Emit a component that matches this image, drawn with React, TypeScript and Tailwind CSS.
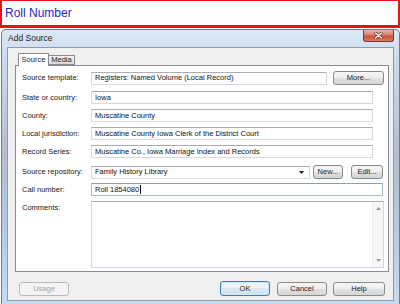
import React from "react";

const fields = [
    { label: "State or country:", value: "Iowa" },
    { label: "County:", value: "Muscatine County" },
    { label: "Local jurisdiction:", value: "Muscatine County Iowa Clerk of the District Court" },
    { label: "Record Series:", value: "Muscatine Co., Iowa Marriage Index and Records" },
];

function Btn({ children, className = "" }: { children: React.ReactNode; className?: string }) {
    return (
        <div
            className={`h-[14px] flex items-center justify-center rounded-[3px] border border-[#8a8a8a] bg-[linear-gradient(#f6f6f6_0%,#eeeeee_50%,#e1e1e1_50%,#d6d6d6_100%)] text-[7.5px] text-[#222] ${className}`}
        >
            {children}
        </div>
    );
}

function Label({ children }: { children: React.ReactNode }) {
    return <div className="w-[69px] shrink-0 text-[7.5px] text-[#222] leading-none">{children}</div>;
}

function Field({ value, className = "" }: { value?: string; className?: string }) {
    return (
        <div
            className={`h-[13px] flex items-center px-[3px] bg-white border border-[#d5d8de] border-t-[#abadb3] text-[7.5px] text-[#111] leading-none ${className}`}
        >
            {value}
        </div>
    );
}

function Tri({ up }: { up?: boolean }) {
    return (
        <svg width="5" height="3" viewBox="0 0 5 3">
            <polygon points={up ? "0,3 5,3 2.5,0" : "0,0 5,0 2.5,3"} fill="#9a9a9a" />
        </svg>
    );
}

export default function App() {
    return (
        <div className="w-[400px] h-[304px] bg-white overflow-hidden flex flex-col font-['Liberation_Sans',Arial,sans-serif]">
            {/* Header */}
            <div className="h-[28px] shrink-0 flex items-center px-[3px] border-x-2 border-t border-b-[3px] border-[#e8101a]">
                <span className="text-[12px] text-[#1f1fc4]">Roll Number</span>
            </div>

            {/* Window */}
            <div className="mt-[1px] ml-[1px] flex-1 flex flex-col rounded-t-[5px] border border-b-0 border-[#6f7c8c] bg-[linear-gradient(#dbe7f4_0%,#cddcee_10%,#b3bfcc_45%,#b7cbe3_75%,#c7dcf1_100%)] px-[5px] pb-[4px]">
                {/* Title bar */}
                <div className="h-[17px] shrink-0 flex items-start justify-between">
                    <span className="pl-[1px] pt-[4px] text-[8.5px] text-[#1c1c1c] leading-none">Add Source</span>
                    <div className="w-[31px] h-[12px] flex items-center justify-center rounded-b-[3px] border border-t-0 border-[#7a3a30] bg-[linear-gradient(#eab3a6_0%,#d9806f_45%,#c9503e_55%,#d77a5c_100%)]">
                        <svg width="9" height="7" viewBox="0 0 9 7">
                            <path d="M1.5 1 L7.5 6 M7.5 1 L1.5 6" stroke="#5a2018" strokeWidth="2.6" strokeLinecap="round" />
                            <path d="M1.5 1 L7.5 6 M7.5 1 L1.5 6" stroke="#ffffff" strokeWidth="1.5" strokeLinecap="round" />
                        </svg>
                    </div>
                </div>

                {/* Client area */}
                <div className="flex-1 flex flex-col bg-[#f0f0f0] border border-[#8b9bb0] pl-[7px] pr-[4px] pt-[5px] pb-[4px]">
                    {/* Tabs */}
                    <div className="h-[12px] flex items-end ml-[3px]">
                        <div className="relative z-10 -mb-px w-[31px] h-[13px] flex items-center justify-center bg-white border border-b-0 border-[#898c95] text-[7.5px] text-[#222]">
                            Source
                        </div>
                        <div className="w-[26px] h-[10px] flex items-center justify-center border border-l-0 border-[#898c95] bg-[linear-gradient(#f3f3f3,#d9d9d9)] text-[7.5px] text-[#222]">
                            Media
                        </div>
                    </div>

                    {/* Tab panel */}
                    <div className="h-[207px] shrink-0 flex flex-col bg-white border border-[#898c95] pl-[6px] pr-[4px] pt-[5px]">
                        <div className="flex items-center">
                            <Label>Source template:</Label>
                            <Field value="Registers: Named Volume (Local Record)" className="w-[236px]" />
                            <Btn className="ml-[6px] w-[51px]">More...</Btn>
                        </div>

                        {fields.map((f, i) => (
                            <div key={f.label} className={`flex items-center ${i === 0 ? "mt-[6px]" : "mt-[5px]"}`}>
                                <Label>{f.label}</Label>
                                <Field value={f.value} className="w-[282px]" />
                            </div>
                        ))}

                        <div className="mt-[7px] flex items-center">
                            <Label>Source repository:</Label>
                            <div className="w-[219px] h-[13px] flex items-center justify-between px-[3px] bg-white border border-[#d5d8de] border-t-[#abadb3] text-[7.5px] text-[#111] leading-none">
                                <span>Family History Library</span>
                                <svg width="5" height="3" viewBox="0 0 5 3" className="mr-[2px]">
                                    <polygon points="0,0 5,0 2.5,3" fill="#1a1a1a" />
                                </svg>
                            </div>
                            <Btn className="ml-[3px] w-[30px]">New...</Btn>
                            <Btn className="ml-[8px] w-[32px]">Edit...</Btn>
                        </div>

                        <div className="mt-[4px] flex items-center">
                            <Label>Call number:</Label>
                            <div className="w-[292px] h-[13px] flex items-center px-[3px] bg-white border border-[#a9b9ca] border-t-[#8aa0b6] text-[7.5px] text-[#111] leading-none">
                                <span>Roll 1854080</span>
                                <span className="ml-[1px] w-px h-[9px] bg-black" />
                            </div>
                        </div>

                        <div className="mt-[5px] flex items-start">
                            <div className="pt-[3px]">
                                <Label>Comments:</Label>
                            </div>
                            <div className="w-[293px] h-[67px] flex justify-end bg-white border border-[#d5d8de] border-t-[#abadb3]">
                                <div className="w-[11px] h-full flex flex-col items-center justify-between py-[5px] border-l border-[#ececec] bg-[#f7f7f7]">
                                    <Tri up />
                                    <Tri />
                                </div>
                            </div>
                        </div>
                    </div>

                    {/* Bottom buttons */}
                    <div className="mt-[9px] flex items-center justify-between ml-[4px] mr-[4px]">
                        <div className="w-[50px] h-[14px] flex items-center justify-center rounded-[3px] border border-[#b5b9bd] bg-[#f4f4f4] text-[7.5px] text-[#a3a3a3]">
                            Usage
                        </div>
                        <div className="flex items-center">
                            <div className="w-[50px] h-[15px] flex items-center justify-center rounded-[3px] border border-[#3c7fb1] bg-[linear-gradient(#f3f8fc_0%,#e9f2f9_50%,#dbe8f2_50%,#d0e1ee_100%)] shadow-[inset_0_0_0_1px_#cfe7f8] text-[7.5px] text-[#222]">
                                OK
                            </div>
                            <Btn className="ml-[7px] w-[50px]">Cancel</Btn>
                            <Btn className="ml-[6px] w-[52px]">Help</Btn>
                        </div>
                    </div>
                </div>
            </div>
        </div>
    );
}
